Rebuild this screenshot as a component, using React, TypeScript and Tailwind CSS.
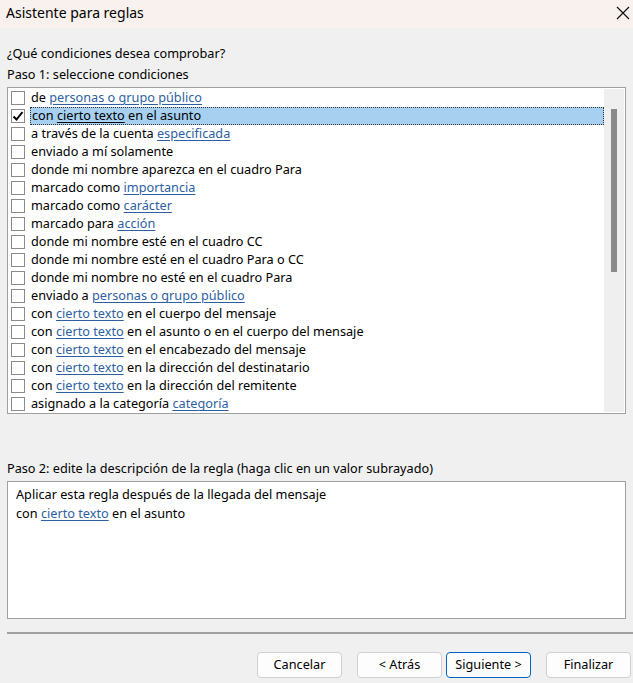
const font = { fontFamily: '"Segoe UI", "Noto Sans", sans-serif' };

type Part = { t: string; link?: boolean };

const rows: Part[][] = [
  [{ t: "de " }, { t: "personas o grupo público", link: true }],
  [{ t: "con " }, { t: "cierto texto", link: true }, { t: " en el asunto" }],
  [{ t: "a través de la cuenta " }, { t: "especificada", link: true }],
  [{ t: "enviado a mí solamente" }],
  [{ t: "donde mi nombre aparezca en el cuadro Para" }],
  [{ t: "marcado como " }, { t: "importancia", link: true }],
  [{ t: "marcado como " }, { t: "carácter", link: true }],
  [{ t: "marcado para " }, { t: "acción", link: true }],
  [{ t: "donde mi nombre esté en el cuadro CC" }],
  [{ t: "donde mi nombre esté en el cuadro Para o CC" }],
  [{ t: "donde mi nombre no esté en el cuadro Para" }],
  [{ t: "enviado a " }, { t: "personas o grupo público", link: true }],
  [{ t: "con " }, { t: "cierto texto", link: true }, { t: " en el cuerpo del mensaje" }],
  [{ t: "con " }, { t: "cierto texto", link: true }, { t: " en el asunto o en el cuerpo del mensaje" }],
  [{ t: "con " }, { t: "cierto texto", link: true }, { t: " en el encabezado del mensaje" }],
  [{ t: "con " }, { t: "cierto texto", link: true }, { t: " en la dirección del destinatario" }],
  [{ t: "con " }, { t: "cierto texto", link: true }, { t: " en la dirección del remitente" }],
  [{ t: "asignado a la categoría " }, { t: "categoría", link: true }],
];

function Row({ parts, selected }: { parts: Part[]; selected?: boolean }) {
  return (
    <div className="flex items-center h-[18px]">
      <div className="w-[14px] h-[14px] ml-[3px] border border-[#8a8a8a] bg-white flex items-center justify-center shrink-0">
        {selected && (
          <svg width="12" height="12" viewBox="0 0 12 12">
            <path d="M1.5 6.5 L4.5 9.5 L10.5 2" fill="none" stroke="#000" strokeWidth="2" />
          </svg>
        )}
      </div>
      <div
        className={
          "ml-[5px] h-[18px] flex items-center pl-[1px] text-[12.7px] text-black whitespace-nowrap " +
          (selected ? "flex-1 bg-[#a6cff0] border border-dotted border-[#333]" : "")
        }
      >
        {parts.map((p, i) =>
          p.link ? (
            <span
              key={i}
              className={"underline underline-offset-2 " + (selected ? "text-black" : "text-[#2e5fa3]")}
            >
              {p.t}
            </span>
          ) : (
            <span key={i} className="whitespace-pre">{p.t}</span>
          )
        )}
      </div>
    </div>
  );
}

function Button({ label, primary }: { label: string; primary?: boolean }) {
  return (
    <button
      className={
        "w-[85px] h-[26px] rounded-[4px] bg-[#fdfdfd] text-[12.7px] text-black border " +
        (primary ? "border-[#0067c0]" : "border-[#d0d0d0]")
      }
    >
      {label}
    </button>
  );
}

export default function App() {
  return (
    <div className="w-[633px] h-[683px] bg-[#f0f0f0] flex flex-col overflow-hidden" style={font}>
      {/* title bar */}
      <div className="h-[28px] bg-[#f9f1ee] flex items-center justify-between pl-[6px] pr-[3px]">
        <span className="text-[14px] text-black -mt-[4px]">Asistente para reglas</span>
        <svg width="14" height="14" viewBox="0 0 14 14" className="-mt-[3px]">
          <path d="M1 1 L13 13 M13 1 L1 13" stroke="#111" strokeWidth="1.2" />
        </svg>
      </div>

      <div className="flex flex-col px-[7px]">
        <div className="mt-[17px] h-[18px] flex items-center text-[12.7px] text-black">
          ¿Qué condiciones desea comprobar?
        </div>
        <div className="mt-[3px] h-[18px] flex items-center text-[12.7px] text-black">
          Paso 1: seleccione condiciones
        </div>

        {/* list box */}
        <div className="mt-[3px] w-[619px] h-[327px] border border-[#a0a0a0] bg-white flex">
          <div className="flex-1 flex flex-col pt-[1px]">
            {rows.map((r, i) => (
              <Row key={i} parts={r} selected={i === 1} />
            ))}
          </div>
          <div className="w-[20px] my-[1px] mr-[1px] bg-[#efefef] flex justify-center">
            <div className="w-[6px] h-[163px] mt-[20px] bg-[#8a8a8a]" />
          </div>
        </div>

        <div className="mt-[46px] h-[18px] flex items-center text-[12.7px] text-black">
          Paso 2: edite la descripción de la regla (haga clic en un valor subrayado)
        </div>

        {/* description box */}
        <div className="mt-[3px] w-[619px] h-[138px] border border-[#a0a0a0] bg-white pl-[8px] pt-[3px] text-[12.7px] text-black">
          <div className="h-[19px] flex items-center">Aplicar esta regla después de la llegada del mensaje</div>
          <div className="h-[19px] flex items-center whitespace-pre">
            con <span className="text-[#2e5fa3] underline underline-offset-2">cierto texto</span> en el asunto
          </div>
        </div>

        <div className="mt-[13px] h-[2px] w-[626px] bg-[#a0a0a0]" />

        <div className="mt-[18px] flex justify-end -mr-[5px]">
          <Button label="Cancelar" />
          <div className="w-[15px]" />
          <Button label="< Atrás" />
          <div className="w-[4px]" />
          <Button label="Siguiente >" primary />
          <div className="w-[15px]" />
          <Button label="Finalizar" />
        </div>
      </div>
    </div>
  );
}
